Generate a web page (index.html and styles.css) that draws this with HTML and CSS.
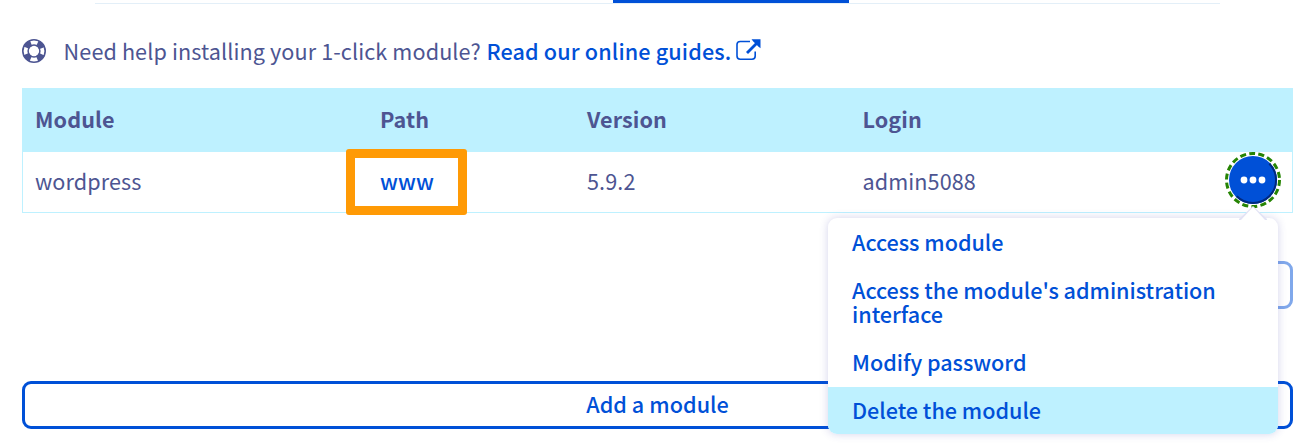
FILE: index.html
```html
<!DOCTYPE html>
<html lang="en">
<head>
<meta charset="utf-8">
<title>1-click modules</title>
<link rel="stylesheet" href="styles.css">
</head>
<body>
<div class="tabs"><div class="tab-active"></div></div>
<main class="content">
  <p class="help">
    <svg class="icon-help" viewBox="0 0 24 24" width="24" height="24">
      <circle cx="12" cy="12" r="8.4" fill="none" stroke="currentColor" stroke-width="6" stroke-dasharray="6.6 6.595" stroke-dashoffset="-3.3"/>
      <circle cx="12" cy="12" r="11.2" fill="none" stroke="currentColor" stroke-width="1.6"/>
      <circle cx="12" cy="12" r="5.9" fill="none" stroke="currentColor" stroke-width="1.5"/>
    </svg>
    <span class="help-text">Need help installing your 1-click module?</span>
    <a class="help-link">Read our online guides.</a>
    <svg class="icon-ext" viewBox="0 0 25 22" width="25" height="22">
      <path d="M14 2.5H4.2Q1 2.5 1 5.5V17Q1 20.2 4.2 20.2H16Q19.2 20.2 19.2 17V12.5" fill="none" stroke="currentColor" stroke-width="1.6"/>
      <path d="M11 14L21.5 3.5" stroke="currentColor" stroke-width="2.8"/>
      <path d="M15.5.2H24.5V9.2L22.3 7.4 17.3 2.4Z" fill="currentColor"/>
    </svg>
  </p>
  <section class="table">
    <div class="row head"><span>Module</span><span>Path</span><span>Version</span><span>Login</span></div>
    <div class="row body">
      <span>wordpress</span>
      <span class="path"><a class="link">www</a><i class="highlight"></i></span>
      <span>5.9.2</span>
      <span>admin5088</span>
      <div class="actions">
        <svg class="trigger" viewBox="0 0 56 56" width="56" height="56">
          <circle cx="28" cy="28" r="24" fill="#0050d7"/>
          <path d="M44.3 11.7A23 23 0 0 1 11.7 44.3" fill="none" stroke="#002980" stroke-width="2"/>
          <circle cx="28" cy="28" r="26.5" fill="none" stroke="#268403" stroke-width="3" stroke-dasharray="6 3.25"/>
          <g fill="#fff"><circle cx="19" cy="28" r="3.4"/><circle cx="28" cy="28" r="3.4"/><circle cx="37" cy="28" r="3.4"/></g>
        </svg>
        <div class="menu">
          <svg class="arrow" viewBox="0 0 28 14" width="28" height="14"><path d="M0 13L14 0 28 13V14H0Z" fill="#e3e3f5"/><path d="M2 14L14 1 26 14Z" fill="#fff"/></svg>
          <a class="item">Access module</a>
          <a class="item">Access the module's administration interface</a>
          <a class="item">Modify password</a>
          <a class="item selected">Delete the module</a>
        </div>
      </div>
    </div>
  </section>
  <div class="pager"><div class="ghost-button"></div></div>
  <div class="add-button"><span>Add a module</span></div>
</main>
</body>
</html>
```
FILE: styles.css
```css
* { box-sizing: border-box; }
body {
  margin: 0;
  height: 445px;
  overflow: hidden;
  background: #fff;
  color: #4d5592;
  font: 400 21.6px/24px "Noto Sans CJK SC", "Open Sans", sans-serif;
}
a { color: #0050d7; font-weight: 500; text-decoration: none; }
.tabs {
  display: flex;
  height: 4px;
  margin: 0 77px 0 95px;
  border-bottom: 1px solid #e3eff8;
}
.tab-active { width: 236px; height: 3px; margin-left: 518px; background: #0050d7; }
.content { padding: 0 4px 0 22px; }
.help { display: flex; align-items: center; height: 24px; margin: 36px 0 24px; white-space: nowrap; letter-spacing: .11px; }
.help-text, .help-link { padding-bottom: 2px; }
.icon-help { margin: -2px 17.6px 0 0; }
.help-link { margin-left: 5.6px; letter-spacing: .14px; }
.icon-ext { color: #0050d7; margin: -4px 0 0 4.4px; }
.row {
  display: grid;
  grid-template-columns: 345px 207px 275.4px 1fr 68px;
  align-items: center;
  padding-left: 13px;
}
.row > span { padding-bottom: 2px; letter-spacing: .1px; }
.head { height: 64px; background: #bef1ff; font-weight: 700; }
.body { height: 61px; border: 1px solid #bef1ff; border-top: 0; padding-left: 12px; }
.path { position: relative; }
.highlight {
  position: absolute;
  left: -34px;
  top: -20px;
  width: 121px;
  height: 66px;
  border: 9px solid #ff9a05;
  border-radius: 3px;
}
.actions { position: relative; height: 60px; }
.trigger { display: block; margin-left: 1px; }
.menu {
  position: absolute;
  top: 66px;
  right: 14px;
  width: 450px;
  height: 216px;
  padding-top: 1px;
  background: #fff;
  border-radius: 9px;
  box-shadow: 0 0 9px rgba(70, 70, 170, .24);
}
.arrow { position: absolute; right: 11px; top: -12px; }
.item { display: block; padding: 11px 24px 13px; line-height: 24px; letter-spacing: -.02px; }
.selected { background: #bef1ff; height: 47px; border-radius: 0 0 9px 9px; }
.pager { display: flex; justify-content: flex-end; margin-top: 48px; }
.ghost-button { width: 120px; height: 48px; border: 3px solid #80a8eb; border-radius: 9px; }
.add-button {
  display: flex;
  align-items: center;
  justify-content: center;
  height: 48px;
  margin-top: 72px;
  padding-bottom: 2px;
  border: 3px solid #0050d7;
  border-radius: 9px;
  color: #0050d7;
  font-weight: 500;
  letter-spacing: .05px;
}
```
